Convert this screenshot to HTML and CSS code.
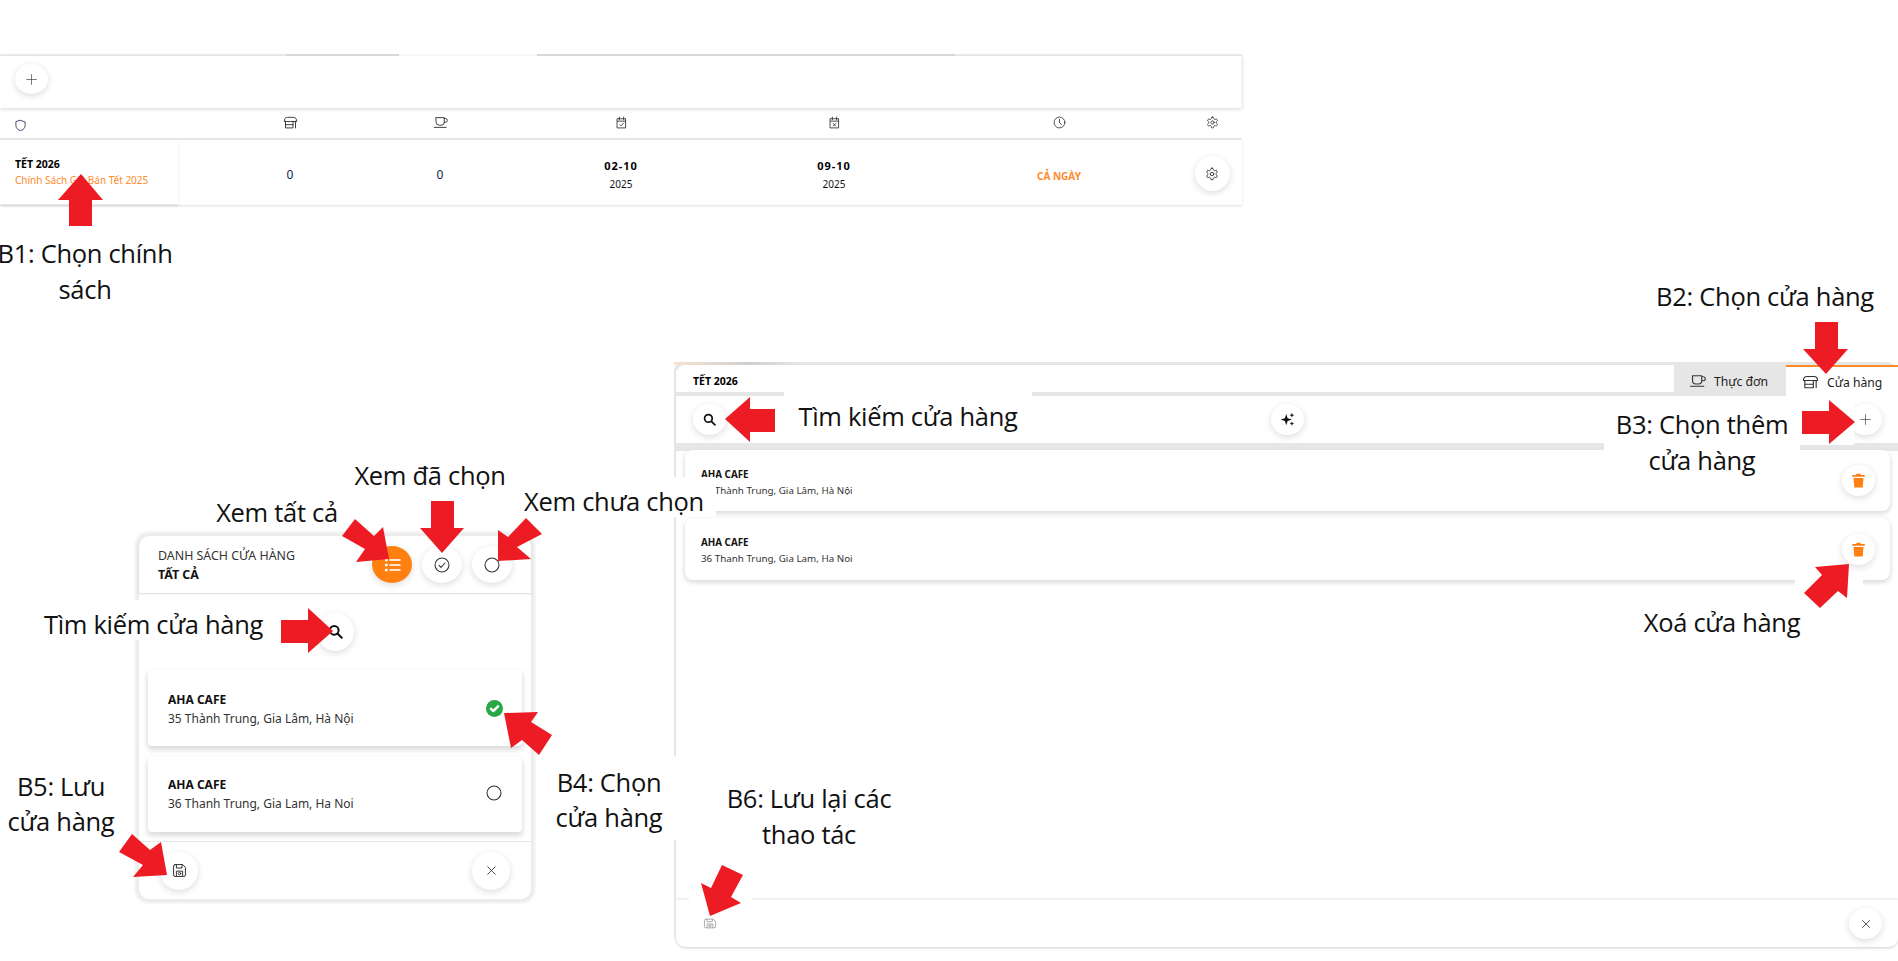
FILE: index.html
```html
<!DOCTYPE html>
<html lang="vi">
<head>
<meta charset="utf-8">
<title>Hướng dẫn</title>
<link rel="stylesheet" href="styles.css">
</head>
<body>
<svg class="defs" width="0" height="0">
  <defs>
    <symbol id="i-plus" viewBox="0 0 24 24"><path d="M12 3v18M3 12h18"/></symbol>
    <symbol id="i-x" viewBox="0 0 24 24"><path d="M5 5l14 14M19 5L5 19"/></symbol>
    <symbol id="i-shield" viewBox="0 0 24 24"><path d="M12 2.500l8.500 3v6.500c0 5-3.800 8-8.500 9.500-4.700-1.500-8.500-4.500-8.500-9.500V5.500z"/></symbol>
    <symbol id="i-store" viewBox="0 0 24 24" preserveAspectRatio="none"><path d="M2 9.500C2 5.500 4 2.500 7 2.500h10c3 0 5 3 5 7zM4 9.500V22h12V9.500M4 16h12M20 9.500V22"/></symbol>
    <symbol id="i-cup" viewBox="0 0 24 24" preserveAspectRatio="none"><path d="M5 3h13v9a5 5 0 0 1-5 5h-3a5 5 0 0 1-5-5zM18 4.500h1.500a3.500 3.500 0 0 1 0 7H18M2 21h19"/></symbol>
    <symbol id="i-cal-ok" viewBox="0 0 24 24"><path d="M4.500 5h15v17h-15zM8 2v5M16 2v5M4.500 9.500h15M9 16l2.200 2.200L15.500 13.500"/></symbol>
    <symbol id="i-cal-x" viewBox="0 0 24 24"><path d="M4.500 5h15v17h-15zM8 2v5M16 2v5M4.500 9.500h15M10 14l4 4.500M14 14l-4 4.500"/></symbol>
    <symbol id="i-clock" viewBox="0 0 24 24"><circle cx="12" cy="12" r="10"/><path d="M12 6v6.500l3.500 3"/></symbol>
    <symbol id="i-gear" viewBox="0 0 24 24"><path d="M12.220 2h-.44a2 2 0 0 0-2 2v.18a2 2 0 0 1-1 1.730l-.43.25a2 2 0 0 1-2 0l-.15-.08a2 2 0 0 0-2.730.73l-.22.38a2 2 0 0 0 .73 2.730l.15.1a2 2 0 0 1 1 1.720v.51a2 2 0 0 1-1 1.740l-.15.09a2 2 0 0 0-.73 2.730l.22.38a2 2 0 0 0 2.730.73l.15-.08a2 2 0 0 1 2 0l.43.25a2 2 0 0 1 1 1.730V20a2 2 0 0 0 2 2h.44a2 2 0 0 0 2-2v-.18a2 2 0 0 1 1-1.730l.43-.25a2 2 0 0 1 2 0l.15.08a2 2 0 0 0 2.730-.73l.22-.39a2 2 0 0 0-.73-2.730l-.15-.08a2 2 0 0 1-1-1.740v-.5a2 2 0 0 1 1-1.740l.15-.09a2 2 0 0 0 .73-2.730l-.22-.38a2 2 0 0 0-2.730-.73l-.15.08a2 2 0 0 1-2 0l-.43-.25a2 2 0 0 1-1-1.730V4a2 2 0 0 0-2-2z"/><circle cx="12" cy="12" r="3"/></symbol>
    <symbol id="i-circle-ok" viewBox="0 0 24 24"><circle cx="12" cy="12" r="10.500"/><path d="M7.500 12.500l3 3 6-6.500"/></symbol>
    <symbol id="i-circle" viewBox="0 0 24 24"><circle cx="12" cy="12" r="10.500"/></symbol>
    <symbol id="i-save" viewBox="0 0 24 24" preserveAspectRatio="none"><path d="M5 2.500h12l4.500 4.500v12a2.500 2.500 0 0 1-2.500 2.500H5A2.500 2.500 0 0 1 2.500 19V5A2.500 2.500 0 0 1 5 2.500zM7 2.500V8h9V2.500M7 21.500V13h10v8.500"/><circle cx="12" cy="17" r="2"/></symbol>
  </defs>
</svg>

<section class="policy">
  <div class="policy-strip"></div>
  <div class="policy-tools">
    <button class="btn btn-add"><svg class="ico ico-13 ico-thin"><use href="#i-plus"/></svg></button>
  </div>
  <div class="policy-grid policy-head">
    <div class="head-first"><svg class="ico ico-13 tint-navy"><use href="#i-shield"/></svg></div>
    <div class="head-spacer"></div>
    <div class="cell"><svg class="ico ico-head"><use href="#i-store"/></svg></div>
    <div class="cell"><svg class="ico ico-head"><use href="#i-cup"/></svg></div>
    <div class="cell"><svg class="ico ico-13"><use href="#i-cal-ok"/></svg></div>
    <div class="cell"><svg class="ico ico-13"><use href="#i-cal-x"/></svg></div>
    <div class="cell"><svg class="ico ico-13"><use href="#i-clock"/></svg></div>
    <div class="cell"><svg class="ico ico-13"><use href="#i-gear"/></svg></div>
  </div>
  <div class="policy-grid policy-row">
    <div class="row-first">
      <div class="row-title">TẾT 2026</div>
      <div class="row-sub">Chính Sách Giá Bán Tết 2025</div>
    </div>
    <div class="head-spacer"></div>
    <div class="cell num">0</div>
    <div class="cell num">0</div>
    <div class="cell date"><b>02-10</b><span>2025</span></div>
    <div class="cell date"><b>09-10</b><span>2025</span></div>
    <div class="cell allday">CẢ NGÀY</div>
    <div class="cell"><button class="btn btn-gear"><svg class="ico ico-14"><use href="#i-gear"/></svg></button></div>
  </div>
</section>

<section class="picker">
  <header class="picker-head">
    <div class="picker-title">
      <div>DANH SÁCH CỬA HÀNG</div>
      <b>TẤT CẢ</b>
    </div>
    <div class="picker-filters">
      <button class="btn btn-filter btn-active">
        <svg class="ico-list" viewBox="0 0 16 14"><circle cx="1.800" cy="2" r="1.500"/><circle cx="1.800" cy="7" r="1.500"/><circle cx="1.800" cy="12" r="1.500"/><rect x="5" y="1.200" width="11" height="1.600"/><rect x="5" y="6.200" width="11" height="1.600"/><rect x="5" y="11.200" width="11" height="1.600"/></svg>
      </button>
      <button class="btn btn-filter"><svg class="ico ico-16"><use href="#i-circle-ok"/></svg></button>
      <button class="btn btn-filter"><svg class="ico ico-16"><use href="#i-circle"/></svg></button>
    </div>
  </header>
  <div class="picker-search">
    <button class="btn btn-search-lg">
      <svg class="ico-search" viewBox="0 0 24 24"><circle cx="10" cy="10" r="7"/><path d="M15.500 15.500L22 22"/></svg>
    </button>
  </div>
  <div class="picker-list">
    <article class="pick-card pick-card-a">
      <div class="store-info"><b>AHA CAFE</b><span>35 Thành Trung, Gia Lâm, Hà Nội</span></div>
      <svg class="ico-tick" viewBox="0 0 24 24"><circle cx="12" cy="12" r="12"/><path d="M7 12.500l3.500 3 6.500-6.500"/></svg>
    </article>
    <article class="pick-card pick-card-b">
      <div class="store-info"><b>AHA CAFE</b><span>36 Thanh Trung, Gia Lam, Ha Noi</span></div>
      <svg class="ico ico-16 ico-radio"><use href="#i-circle"/></svg>
    </article>
  </div>
  <footer class="picker-foot">
    <button class="btn btn-foot"><svg class="ico ico-15"><use href="#i-save"/></svg></button>
    <button class="btn btn-foot"><svg class="ico ico-13"><use href="#i-x"/></svg></button>
  </footer>
</section>

<section class="stores">
  <div class="stores-glow"></div>
  <header class="stores-head">
    <div class="stores-name">TẾT 2026</div>
    <nav class="tabs">
      <div class="tab tab-menu"><svg class="ico ico-tab"><use href="#i-cup"/></svg>Thực đơn</div>
      <div class="tab tab-store"><svg class="ico ico-tab"><use href="#i-store"/></svg>Cửa hàng</div>
    </nav>
  </header>
  <div class="stores-tools">
    <button class="btn btn-tool">
      <svg class="ico-search ico-search-sm" viewBox="0 0 24 24"><circle cx="10" cy="10" r="7"/><path d="M15.500 15.500L22 22"/></svg>
    </button>
    <button class="btn btn-tool">
      <svg class="ico-spark" viewBox="0 0 24 24"><path d="M10 3l2.200 6.800L19 12l-6.800 2.200L10 21l-2.200-6.800L1 12l6.800-2.200zM19 1l1.100 2.900L23 5l-2.900 1.100L19 9l-1.100-2.900L15 5l2.900-1.100zM19 15l1 2.500 2.500 1-2.500 1-1 2.500-1-2.500-2.500-1 2.500-1z"/></svg>
    </button>
    <button class="btn btn-tool"><svg class="ico ico-13 ico-thin"><use href="#i-plus"/></svg></button>
  </div>
  <div class="stores-list">
    <article class="store-card store-card-a">
      <div class="store-info store-info-sm"><b>AHA CAFE</b><span>35 Thành Trung, Gia Lâm, Hà Nội</span></div>
      <button class="btn btn-trash"><svg class="ico-trash" viewBox="0 0 24 24"><path d="M9 1h6l1 2h6v3H2V3h6zM4 8h16l-1.300 15H5.300z"/></svg></button>
    </article>
    <article class="store-card store-card-b">
      <div class="store-info store-info-sm"><b>AHA CAFE</b><span>36 Thanh Trung, Gia Lam, Ha Noi</span></div>
      <button class="btn btn-trash"><svg class="ico-trash" viewBox="0 0 24 24"><path d="M9 1h6l1 2h6v3H2V3h6zM4 8h16l-1.300 15H5.300z"/></svg></button>
    </article>
  </div>
  <footer class="stores-foot">
    <svg class="ico-save-flat"><use href="#i-save"/></svg>
    <button class="btn btn-tool"><svg class="ico ico-12"><use href="#i-x"/></svg></button>
  </footer>
</section>

<div class="note n-b1">B1: Chọn chính<br>sách</div>
<div class="note n-b2">B2: Chọn cửa hàng</div>
<div class="note n-b3">B3: Chọn thêm<br>cửa hàng</div>
<div class="note n-b4">B4: Chọn<br>cửa hàng</div>
<div class="note n-b5">B5: Lưu<br>cửa hàng</div>
<div class="note n-b6">B6: Lưu lại các<br>thao tác</div>
<div class="note n-find-a">Tìm kiếm cửa hàng</div>
<div class="note n-find-b">Tìm kiếm cửa hàng</div>
<div class="note n-all">Xem tất cả</div>
<div class="note n-done">Xem đã chọn</div>
<div class="note n-todo">Xem chưa chọn</div>
<div class="note n-del">Xoá cửa hàng</div>

<svg class="arrows" viewBox="0 0 1898 961" width="1898" height="961">
  <rect class="mask" x="1800" y="397" width="54" height="48"/>
  <rect class="mask" x="1795" y="580" width="68" height="12"/>
  <rect class="mask" x="689" y="890" width="63" height="12"/>
  <polygon points="81,174 103,200 92,200 92,226 69,226 69,200 58,200"/>
  <polygon points="355,519 374,536 383,527 389,559 356,562 365,549 342,536"/>
  <polygon points="431,501 454,501 454,528 464,528 442,553 420,528 431,528"/>
  <polygon points="526,518 542,534 517,547 531,559 498,561 498,530 508,537"/>
  <polygon points="281,620 308,620 308,608 333,631 308,653 308,643 281,643"/>
  <polygon points="504,713 538,712 531,722 552,735 539,755 522,740 511,748"/>
  <polygon points="132,834 150,850 161,842 167,875 133,877 143,865 119,852"/>
  <polygon points="725,419 750,397 750,409 775,409 775,432 750,432 750,442"/>
  <polygon points="1815,322 1838,322 1838,349 1848,349 1826,374 1803,349 1815,349"/>
  <polygon points="1802,411 1829,411 1829,400 1855,422 1829,444 1829,434 1802,434"/>
  <polygon points="1849,564 1847,598 1838,591 1820,608 1804,593 1822,575 1815,567"/>
  <polygon points="722,865 743,875 731,897 741,903 710,916 701,883 711,888"/>
</svg>
</body>
</html>
```

FILE: styles.css
```css
* { box-sizing: border-box; }
html, body { margin: 0; padding: 0; }
body {
  position: relative;
  width: 1898px;
  height: 961px;
  overflow: hidden;
  background: #fff;
  color: #111;
  font-family: "Noto Sans", "Open Sans", sans-serif;
}
.defs { position: absolute; }
button { font: inherit; padding: 0; border: 0; color: inherit; }

.ico { fill: none; stroke: #333; stroke-width: 1.600; display: block; stroke-linecap: round; stroke-linejoin: round; flex: none; }
.ico-thin { stroke-width: 1.200; }
.ico-12 { width: 12px; height: 12px; }
.ico-13 { width: 13px; height: 13px; }
.ico-14 { width: 14px; height: 14px; }
.ico-15 { width: 15px; height: 15px; }
.ico-16 { width: 16px; height: 16px; }
.ico-head { width: 15px; height: 13px; }
.ico-tab { width: 17px; height: 14px; }
.tint-navy { stroke: #33305e; }

.btn {
  display: flex;
  align-items: center;
  justify-content: center;
  flex: none;
  background: #fff;
  border-radius: 50%;
  box-shadow: 0 2px 7px rgba(0, 0, 0, .14);
}

/* B1: policy table */
.policy { position: absolute; left: 0; top: 54px; width: 1242px; }
.policy-strip {
  height: 2px;
  background: linear-gradient(90deg, #eee 286px, #ddd 286px, #ddd 399px, #fff 399px, #fff 537px, #ddd 537px, #ddd 955px, #eee 955px);
}
.policy-tools {
  height: 52px;
  display: flex;
  align-items: center;
  padding: 0 0 6px 15px;
  box-shadow: 0 1px 4px rgba(0, 0, 0, .16), inset -1px 0 0 #f3f3f3;
}
.btn-add { width: 33px; height: 30px; }
.policy-grid {
  display: grid;
  grid-template-columns: 178px 32px 160px 140px 222px 204px 246px 60px;
  align-items: center;
}
.policy-head {
  margin-top: 2px;
  height: 30px;
  border-bottom: 2px solid #e8e8e8;
  padding-bottom: 4px;
}
.head-first { padding-left: 14px; padding-top: 6px; }
.cell { display: flex; flex-direction: column; align-items: center; justify-content: center; }
.policy-row {
  height: 65px;
  box-shadow: 0 1px 2px rgba(0, 0, 0, .14);
}
.row-first {
  align-self: start;
  height: 64px;
  padding: 16px 0 0 15px;
  box-shadow: 0 2px 3px rgba(0, 0, 0, .1);
}
.row-title { font-size: 10.500px; font-weight: 700; line-height: 16px; color: #000; }
.row-sub { font-size: 10px; line-height: 16px; color: #ff8a2b; white-space: nowrap; }
.num { font-size: 12px; color: #0f2a45; padding-top: 4px; }
.date { font-size: 10px; line-height: 18px; padding-top: 4px; }
.date b { font-size: 11px; letter-spacing: 1px; color: #000; }
.allday { font-size: 10px; font-weight: 700; color: #ff8a2b; padding-top: 6px; }
.btn-gear { width: 35px; height: 35px; margin-top: 2px; }

/* B4/B5: store picker */
.picker {
  position: absolute;
  left: 139px;
  top: 536px;
  width: 392px;
  height: 363px;
  display: flex;
  flex-direction: column;
  background: #fff;
  border-radius: 10px;
  box-shadow: 0 0 3px 4px #ececec;
}
.picker-head {
  height: 57px;
  flex: none;
  display: flex;
  align-items: center;
  justify-content: space-between;
  padding: 0 19px;
  border-radius: 10px 10px 0 0;
  box-shadow: 0 1px 2px rgba(0, 0, 0, .14);
}
.picker-title { font-size: 12.400px; line-height: 19px; color: #333; }
.picker-title b { color: #111; }
.picker-filters { display: flex; gap: 10px; }
.btn-filter { width: 40px; height: 37px; }
.btn-active { background: #ff7f11; }
.ico-list { width: 17px; height: 14px; fill: #fff; display: block; }
.picker-search { height: 77px; flex: none; display: flex; justify-content: center; align-items: center; }
.btn-search-lg { width: 37px; height: 38px; }
.ico-search { width: 15px; height: 15px; fill: none; stroke: #111; stroke-width: 3.200; stroke-linecap: round; display: block; }
.ico-search-sm { width: 13px; height: 13px; }
.picker-list { display: flex; flex-direction: column; gap: 11px; padding: 0 9px; flex: none; }
.pick-card {
  display: flex;
  align-items: center;
  justify-content: space-between;
  padding: 0 20px;
  background: #fff;
  border-radius: 4px;
  box-shadow: 0 3px 5px 1px #dcdcdc;
}
.pick-card-a { height: 76px; }
.pick-card-b { height: 75px; padding-bottom: 3px; }
.store-info { display: flex; flex-direction: column; font-size: 12px; line-height: 19px; color: #333; padding-top: 2px; }
.store-info b { color: #111; }
.ico-tick { width: 17px; height: 17px; fill: #28a745; margin-right: -1px; }
.ico-tick path { fill: none; stroke: #fff; stroke-width: 3.500; stroke-linecap: round; stroke-linejoin: round; }
.ico-radio { stroke: #333; }
.picker-foot {
  margin-top: 10px;
  flex: 1;
  display: flex;
  align-items: center;
  justify-content: space-between;
  padding: 0 21px;
  border-radius: 0 0 10px 10px;
  box-shadow: 0 -1px 0 #e6e6e6;
}
.btn-foot { width: 38px; height: 38px; }

/* B2/B3/B6: stores panel */
.stores {
  position: absolute;
  left: 676px;
  top: 365px;
  width: 1222px;
  height: 582px;
  display: flex;
  flex-direction: column;
  background: #fff;
  border-radius: 9px;
  box-shadow: -2px -3px 0 #e6e6e6, 0 1px 3px rgba(0, 0, 0, .2);
}
.stores-glow {
  position: absolute;
  left: -2px;
  top: -3px;
  width: 126px;
  height: 3px;
  background: linear-gradient(90deg, #f7e3d0, #cfcfcf 60%, #e6e6e6);
}
.stores-head {
  height: 31px;
  flex: none;
  display: flex;
  justify-content: space-between;
  background: linear-gradient(#fff 27px, #e6e6e6 27px);
  border-radius: 9px 0 0 0;
}
.stores-name { font-size: 10.500px; font-weight: 700; color: #000; padding: 9px 0 0 17px; line-height: 14px; }
.tabs { display: flex; height: 32px; }
.tab { display: flex; align-items: center; gap: 8px; font-size: 12.200px; color: #222; white-space: nowrap; }
.tab-menu { width: 112px; background: #e6e6e6; padding-left: 15px; }
.tab-store { width: 112px; background: #fff; border-top: 2px solid #ff8a2b; padding-left: 16px; }
.stores-tools {
  height: 47px;
  flex: none;
  display: flex;
  align-items: center;
  justify-content: space-between;
  padding: 0 16px 0 17px;
  background: #fff;
  box-shadow: 0 1px 2px rgba(0, 0, 0, .1);
}
.btn-tool { width: 33px; height: 31px; }
.ico-spark { width: 15px; height: 15px; fill: #111; display: block; }
.stores-list {
  display: flex;
  flex-direction: column;
  gap: 7px;
  padding: 0 8px 0 9px;
  flex: none;
  border-top: 7px solid #e6e6e6;
  background: linear-gradient(#e6e6e6, #e6e6e6 1px, #fff 1px);
}
.store-card {
  display: flex;
  align-items: center;
  justify-content: space-between;
  padding: 0 16px;
  background: #fff;
  border-radius: 8px;
  box-shadow: 0 2px 4px 1px #dedede;
}
.store-card-a { height: 61px; }
.store-card-b { height: 62px; }
.store-info-sm { font-size: 9.800px; line-height: 16px; padding: 4px 0 0; }
.btn-trash { width: 33px; height: 31px; margin-right: -0.500px; }
.ico-trash { width: 15px; height: 15px; fill: #ff7f11; display: block; }
.stores-foot {
  margin-top: auto;
  height: 47px;
  flex: none;
  display: flex;
  align-items: center;
  justify-content: space-between;
  padding: 0 16px 0 27px;
  border-radius: 0 0 9px 9px;
  box-shadow: 0 -2px 2px #eee;
}
.ico-save-flat { width: 14px; height: 11px; fill: none; stroke: #999; stroke-width: 1.600; display: block; }

/* Annotations */
.note {
  position: absolute;
  font-family: "Open Sans", "Noto Sans", sans-serif;
  font-size: 25.500px;
  letter-spacing: -0.300px;
  line-height: 36px;
  text-align: center;
  white-space: nowrap;
  color: #111;
  background: #fff;
}
.n-b1 { left: -15px; top: 235px; width: 200px; background: none; }
.n-b2 { left: 1640px; top: 278px; width: 250px; background: none; }
.n-b3 { left: 1604px; top: 397px; width: 196px; height: 84px; padding-top: 9px; }
.n-b4 { left: 538px; top: 756px; width: 142px; height: 84px; padding-top: 9px; line-height: 35px; background: linear-gradient(90deg, transparent 20px, #fff 20px); }
.n-b5 { left: 0; top: 769px; width: 122px; line-height: 35px; background: none; }
.n-b6 { left: 700px; top: 780px; width: 218px; background: none; }
.n-find-a { left: 30px; top: 600px; width: 247px; height: 40px; padding-top: 6px; }
.n-find-b { left: 784px; top: 391px; width: 248px; height: 51px; padding-top: 7px; }
.n-all { left: 190px; top: 494px; width: 174px; background: none; }
.n-done { left: 340px; top: 457px; width: 180px; background: none; }
.n-todo { left: 512px; top: 477px; width: 204px; height: 40px; padding-top: 6px; }
.n-del { left: 1622px; top: 604px; width: 200px; background: none; }

.arrows { position: absolute; left: 0; top: 0; pointer-events: none; }
.arrows polygon { fill: #ed1c24; }
.arrows .mask { fill: #fff; }
```
